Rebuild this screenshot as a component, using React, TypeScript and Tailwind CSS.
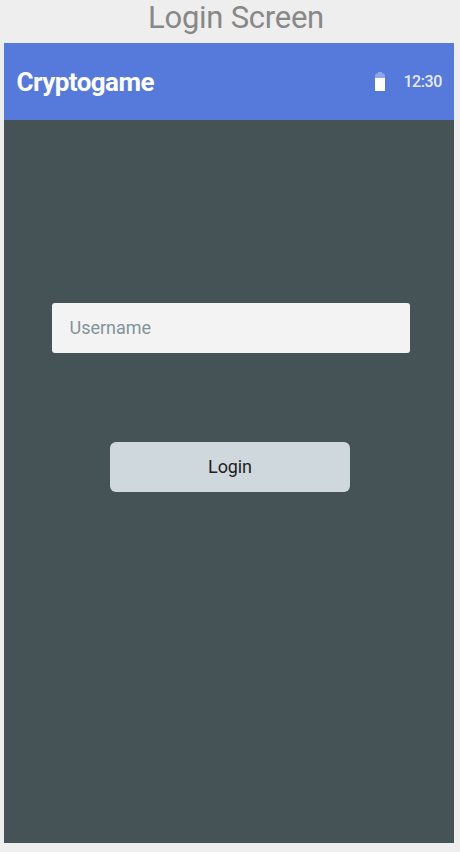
export default function App() {
  return (
    <div className="flex h-[852px] w-[460px] flex-col overflow-hidden bg-[#eeeeee] pl-1 font-['Roboto',sans-serif]">
      <h1 className="h-[43px] shrink-0 pl-[144px] text-[31px] leading-[36px] tracking-[-0.25px] text-[#888888]">Login Screen</h1>
      <main className="flex h-[800px] w-[450px] shrink-0 flex-col bg-[#455357]">
        <header className="flex h-[77px] shrink-0 items-center bg-[#5679dc] pr-3 pl-[12.5px] text-white">
          <span className="pt-[2px] text-[26px] font-bold tracking-[-0.55px]">Cryptogame</span>
          <svg className="ml-auto" width="10" height="19" viewBox="0 0 10 19">
            <path d="M3 0h4v1.5h2L10 3v3H0V3l1-1.5h2z" fill="#8fa6e8" />
            <path d="M0 6h10v13H0z" fill="#fff" />
          </svg>
          <span className="ml-[18px] pt-px text-[16px] font-medium tracking-[-0.4px] text-[#e6ebfa]">12:30</span>
        </header>
        <form className="flex flex-col items-center pt-[183px] pl-[2px]">
          <input aria-label="Username" placeholder="Username" className="ml-px h-[50px] w-[358px] rounded-[3px] bg-[#f3f3f3] px-[18px] pb-[2px] text-[18px] placeholder:text-[#829499]" />
          <button type="button" className="mt-[89px] h-[50px] w-[240px] rounded-[6px] bg-[#cfd8dd] pb-[2px] text-[18px] tracking-[-0.1px] text-[#212121]">Login</button>
        </form>
      </main>
    </div>
  );
}
